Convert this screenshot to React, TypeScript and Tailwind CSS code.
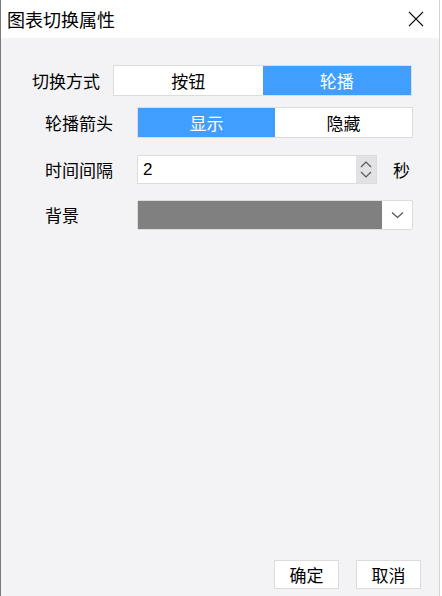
import React from "react"

const font = { fontFamily: '"Noto Sans CJK SC", "Noto Sans", sans-serif' }

function Segment({ left, right, active, className }: { left: string; right: string; active: 0 | 1; className: string }) {
  return (
    <div className={`flex h-[31px] border border-[#dcdcdc] bg-white text-[17px] ${className}`}>
      <div className={`flex flex-1 items-center justify-center ${active === 0 ? "bg-[#409eff] text-white" : "text-black"}`}>{left}</div>
      <div className={`flex flex-1 items-center justify-center ${active === 1 ? "bg-[#409eff] text-white" : "text-black"}`}>{right}</div>
    </div>
  )
}

export default function App() {
  return (
    <div className="h-[596px] w-[442px] bg-white" style={font}>
      <div className="flex h-full w-[440px] flex-col border-l border-r border-l-[#7a7a7a] border-r-[#d4d4d4]">
        <div className="flex h-[38px] shrink-0 items-center justify-between bg-white pl-[6px] pr-[15px]">
          <span className="text-[18px] leading-none text-black">图表切换属性</span>
          <svg width="16" height="16" viewBox="0 0 16 16">
            <path d="M1 1 L15 15 M15 1 L1 15" stroke="#111" strokeWidth="1.1" fill="none" />
          </svg>
        </div>
        <div className="flex flex-1 flex-col bg-[#f3f3f5] text-[17px] text-black">
          <div className="mt-[27px] flex h-[31px] items-center">
            <span className="ml-[31px] w-[81px] leading-none">切换方式</span>
            <Segment left="按钮" right="轮播" active={1} className="w-[299px]" />
          </div>
          <div className="mt-[11px] flex h-[31px] items-center">
            <span className="ml-[44px] w-[92px] leading-none">轮播箭头</span>
            <Segment left="显示" right="隐藏" active={0} className="w-[276px]" />
          </div>
          <div className="mt-[17px] flex h-[29px] items-center">
            <span className="ml-[44px] w-[92px] leading-none">时间间隔</span>
            <div className="flex h-[29px] w-[240px] border border-[#dcdcdc] bg-white">
              <div className="flex flex-1 items-center pl-[5px] text-[17px]" style={{ fontFamily: '"Liberation Sans", Arial, sans-serif' }}>2</div>
              <div className="flex w-[20px] flex-col items-center justify-center gap-[3px] bg-[#e2e2e4]">
                <svg width="12" height="8" viewBox="0 0 12 8"><path d="M1 7 L6 2 L11 7" stroke="#555" strokeWidth="1.2" fill="none" /></svg>
                <svg width="12" height="8" viewBox="0 0 12 8"><path d="M1 1 L6 6 L11 1" stroke="#555" strokeWidth="1.2" fill="none" /></svg>
              </div>
            </div>
            <span className="ml-[16px] leading-none">秒</span>
          </div>
          <div className="mt-[16px] flex h-[29px] items-center">
            <span className="ml-[44px] w-[92px] leading-none">背景</span>
            <div className="flex h-[30px] w-[276px] rounded-[2px] border border-[#dcdcdc] bg-white">
              <div className="flex-1 bg-[#808080]" />
              <div className="flex w-[30px] items-center justify-center">
                <svg width="13" height="8" viewBox="0 0 13 8"><path d="M1 1.5 L6.5 6.5 L12 1.5" stroke="#555" strokeWidth="1.2" fill="none" /></svg>
              </div>
            </div>
          </div>
          <div className="flex-1" />
          <div className="mb-[7px] flex justify-end gap-[17px] pr-[18px]">
            <button className="flex h-[29px] w-[65px] items-center justify-center border border-[#dcdcdc] bg-white text-[17px] leading-none">确定</button>
            <button className="flex h-[29px] w-[65px] items-center justify-center border border-[#dcdcdc] bg-white text-[17px] leading-none">取消</button>
          </div>
        </div>
      </div>
    </div>
  )
}
